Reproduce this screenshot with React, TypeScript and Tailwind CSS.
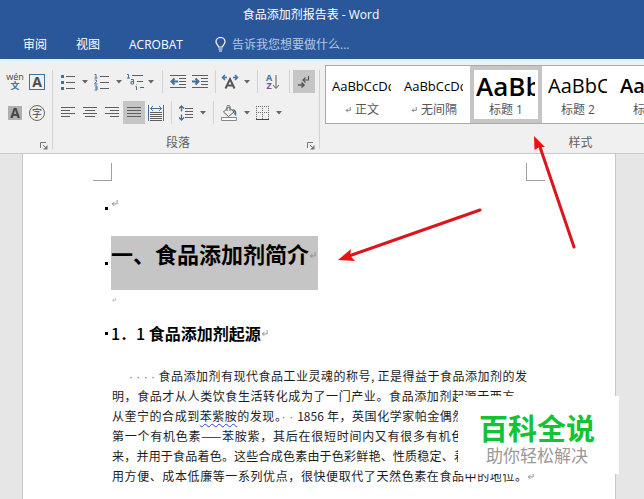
import type { ReactNode } from "react";

const ink = "#5f5f5f";
const blue = "#41719c";

function Tool({ label, w = "w-[22px]", active = false, children }: { label: string; w?: string; active?: boolean; children: ReactNode }) {
  return (
    <button
      type="button"
      aria-label={label}
      className={`flex h-[23px] shrink-0 items-center justify-center ${w} ${active ? "bg-[#c5c5c5]" : ""}`}
    >
      {children}
    </button>
  );
}

function Caret({ label }: { label: string }) {
  return (
    <Tool label={label} w="w-[12px]">
      <svg width="6" height="4" viewBox="0 0 6 4"><path d="M0 0h6L3 3.5z" fill="#666" /></svg>
    </Tool>
  );
}

function Sep({ w = "w-[8px]" }: { w?: string }) {
  return (
    <span className={`flex h-[23px] shrink-0 justify-center ${w}`}>
      <span className="w-px bg-[#d2d2d2]" />
    </span>
  );
}

function Lines({ rows }: { rows: [number, number][] }) {
  return (
    <svg width="16" height="16" viewBox="0 0 16 16" shapeRendering="crispEdges">
      {rows.map(([x, w], i) => (
        <rect key={i} x={x} y={2 + i * 3} width={w} height="1" fill={ink} />
      ))}
    </svg>
  );
}

function Indent({ out }: { out: boolean }) {
  return (
    <svg width="16" height="16" viewBox="0 0 16 16">
      <path d="M0 1.500h16M9 4.500h7M9 7.500h7M9 10.500h7M0 13.500h16" stroke={ink} />
      <path d={out ? "M8 7.500H2M4.500 4.500l-3 3 3 3" : "M0 7.500h6M3.500 4.500l3 3-3 3"} stroke={blue} strokeWidth="2" fill="none" />
    </svg>
  );
}

function Return({ size = 7, color = "#888" }: { size?: number; color?: string }) {
  return (
    <svg className="shrink-0" width={size} height={size} viewBox="0 0 8 8">
      <path d="M7 0v4.500H1.500M4 2L1.500 4.500 4 7" stroke={color} fill="none" />
    </svg>
  );
}

function Launcher({ label }: { label: string }) {
  return (
    <button type="button" aria-label={label} className="flex h-[8px] w-[8px]">
      <svg width="8" height="8" viewBox="0 0 8 8">
        <path d="M.5 6V.5H6M3 3l3 3" stroke="#777" fill="none" />
        <path d="M7.500 3v4.500H3z" fill="#777" />
      </svg>
    </button>
  );
}

function FontTools() {
  return (
    <section aria-label="字体" className="flex w-[53px] shrink-0 flex-col border-r border-[#d2d2d2] pl-1">
      <div className="flex">
        <Tool label="拼音指南">
          <span className="flex flex-col items-center">
            <span className="h-[8px] text-[9px] leading-[8px] text-[#444]">wén</span>
            <span className="h-[9px] text-[9px] font-bold leading-[9px] text-[#41719c]">文</span>
          </span>
        </Tool>
        <Tool label="字符边框">
          <span className="flex h-[16px] w-[16px] items-center justify-center border border-[#41719c] text-[14px] font-bold leading-[14px] text-[#4a4a4a]">A</span>
        </Tool>
      </div>
      <div className="mt-2 flex">
        <Tool label="字符底纹">
          <span className="flex h-[14px] w-[14px] items-center justify-center bg-[#b0b0b0] text-[14px] font-bold leading-[14px] text-[#444]">A</span>
        </Tool>
        <Tool label="带圈字符">
          <span className="flex h-[16px] w-[16px] items-center justify-center rounded-full border border-[#666] text-[10px] leading-[10px] text-[#444]">字</span>
        </Tool>
      </div>
      <div className="mt-[18px] flex justify-end pr-1"><Launcher label="字体设置" /></div>
    </section>
  );
}

function ParagraphTools() {
  return (
    <section aria-label="段落" className="flex w-[267px] shrink-0 flex-col border-r border-[#d2d2d2] pl-1">
      <div className="flex">
        <Tool label="项目符号">
          <svg width="14" height="16" viewBox="0 0 14 16">
            <path d="M5 2.500h9M5 8.500h9M5 14.500h9" stroke={ink} />
            <path d="M0 1h3v3H0zM0 7h3v3H0zM0 13h3v3H0z" fill={blue} />
          </svg>
        </Tool>
        <Caret label="更多项目符号" />
        <Tool label="编号">
          <svg width="16" height="18" viewBox="0 0 16 18">
            <path d="M6 3.500h9M6 9.500h9M6 15.500h9" stroke={ink} />
            <path d="M.5 1.500H2V5M.5 5h3M.5 7h2v1.500L.5 11h3M.5 13h2.500v4H.5M1 15h2" stroke={blue} fill="none" />
          </svg>
        </Tool>
        <Caret label="更多编号" />
        <Tool label="多级列表" w="w-[20px]">
          <svg width="18" height="18" viewBox="0 0 18 18">
            <path d="M6 2.500h11M11 8.500h6M14 14.500h4" stroke={ink} />
            <path d="M1 1.500h1.500V5M1 5h3M5 6.500h2.500V11H5V8.500h2.500M10.500 11.500V12M9.500 13.500h1V17" stroke={blue} fill="none" />
          </svg>
        </Tool>
        <Caret label="更多多级列表" />
        <Sep w="w-[10px]" />
        <Tool label="减少缩进量"><Indent out /></Tool>
        <Tool label="增加缩进量"><Indent out={false} /></Tool>
        <Sep />
        <Tool label="中文版式">
          <svg width="18" height="16" viewBox="0 0 18 16">
            <path d="M4.500 14.500L9 5l4.500 9.500M6 11.500h6" stroke="#555" strokeWidth="2" fill="none" />
            <path d="M6 3.500H2M4 1L1.500 3.500 4 6M12 3.500h4M14 1l2.500 2.500L14 6" stroke={blue} strokeWidth="1.500" fill="none" />
          </svg>
        </Tool>
        <Caret label="更多中文版式" />
        <Sep />
        <Tool label="排序" w="w-[24px]">
          <span className="flex flex-col text-[9px] font-bold leading-[8px]">
            <span className="text-[#41719c]">A</span>
            <span className="text-[#80529b]">Z</span>
          </span>
          <svg width="8" height="16" viewBox="0 0 8 16"><path d="M4 1v13M1 11l3 3.500L7 11" stroke={ink} fill="none" /></svg>
        </Tool>
        <Sep />
        <Tool label="显示编辑标记" active>
          <svg width="12" height="14" viewBox="0 0 12 14">
            <path d="M10.500 1v4H5M7.500 2.500L5 5l2.500 2.500" stroke="#555" fill="none" strokeWidth="1.200" />
            <path d="M0 10h6M3.500 7.500L6 10l-2.500 2.500" stroke="#555" fill="none" strokeWidth="1.500" />
          </svg>
        </Tool>
      </div>
      <div className="mt-2 flex">
        <Tool label="左对齐"><Lines rows={[[1, 14], [1, 9], [1, 14], [1, 9]]} /></Tool>
        <Tool label="居中"><Lines rows={[[1, 14], [3, 10], [1, 14], [3, 10]]} /></Tool>
        <Tool label="右对齐"><Lines rows={[[1, 14], [6, 9], [1, 14], [6, 9]]} /></Tool>
        <Tool label="两端对齐" active><Lines rows={[[1, 14], [1, 14], [1, 14], [1, 14]]} /></Tool>
        <Tool label="分散对齐">
          <svg width="16" height="16" viewBox="0 0 16 16">
            <path d="M.5 0v16M15.500 0v16M3 3.500h10M5 1L2.500 3.500 5 6M11 1l2.500 2.500L11 6" stroke={blue} fill="none" />
            <path d="M2 7.500h12M2 9.500h12M2 11.500h12M2 13.500h12M2 15.500h12" stroke={ink} />
          </svg>
        </Tool>
        <Sep />
        <Tool label="行距">
          <svg width="14" height="16" viewBox="0 0 14 16">
            <path d="M6 3.500h8M6 6.500h8M6 9.500h8M6 12.500h8" stroke={ink} />
            <path d="M2.500 1v5.500M2.500 9.500V15M0 3.500L2.500 1 5 3.500M0 12.500L2.500 15 5 12.500" stroke={blue} strokeWidth="1.300" fill="none" />
          </svg>
        </Tool>
        <Caret label="更多行距" />
        <Sep />
        <Tool label="底纹" w="w-[24px]">
          <svg width="18" height="16" viewBox="0 0 18 16">
            <path d="M8.500 2l5.500 5-5.500 4.500-5-4.500zM7 6V1.500C7 0 10 0 10 1.500V6" stroke={ink} fill="none" />
            <path d="M12 4c4 0 5 3 4 7-2-1-2-3-1.500-4z" fill={blue} />
            <path d="M1.500 12.500h15v3h-15z" stroke="#888" fill="#fff" />
          </svg>
        </Tool>
        <Caret label="更多底纹" />
        <Tool label="边框" w="w-[20px]">
          <svg width="14" height="14" viewBox="0 0 14 14">
            <path d="M0 .5h13M0 6.500h13M.5 0v13M6.500 0v13M12.500 0v13" stroke="#666" strokeDasharray="1 1" />
            <path d="M0 13.500h13" stroke="#444" />
          </svg>
        </Tool>
        <Caret label="更多边框" />
      </div>
      <div className="mt-[10px] flex h-[18px] items-center text-[12px] text-[#5f5f5f]">
        <span className="flex-1 pr-2 text-center leading-[18px]">段落</span>
        <span className="pr-1 pt-[6px]"><Launcher label="段落设置" /></span>
      </div>
    </section>
  );
}

const styles = [
  { sample: "AaBbCcDd", look: "text-[13px]", name: "正文", mark: true, on: false },
  { sample: "AaBbCcDd", look: "text-[13px]", name: "无间隔", mark: true, on: false },
  { sample: "AaBbC", look: "text-[26px] font-semibold", name: "标题 1", mark: false, on: true },
  { sample: "AaBbC", look: "text-[20px]", name: "标题 2", mark: false, on: false },
  { sample: "AaBbC", look: "text-[20px] font-semibold", name: "标题 3", mark: false, on: false },
];

function StyleGallery() {
  return (
    <section aria-label="样式" className="-mt-[5px] flex w-[516px] shrink-0 flex-col pl-[5px]">
      <div className="flex h-[60px] border border-[#ababab] bg-white">
        {styles.map((s, i) => (
          <button
            key={i}
            type="button"
            className={`flex h-[57px] w-[72px] shrink-0 flex-col border-4 px-[2px] ${s.on ? "border-[#c5c5c5]" : "border-transparent"}`}
          >
            <span className={`flex h-[32px] w-[59px] items-center overflow-hidden text-black ${s.look} leading-[30px]`}>{s.sample}</span>
            <span className="flex h-[16px] w-full items-center justify-center gap-1 text-[12px] leading-[16px] text-[#555]">
              {s.mark && <Return size={6} color="#666" />}
              {s.name}
            </span>
          </button>
        ))}
      </div>
      <div className="mt-[10px] h-[18px] text-center text-[12px] leading-[18px] text-[#5f5f5f]">样式</div>
    </section>
  );
}

function Bullet() {
  return <span className="mr-[3px] h-[3px] w-[3px] shrink-0 bg-black" />;
}

const line = "block h-[20px] whitespace-nowrap [text-align:justify] [text-align-last:justify]";

function Page() {
  return (
    <article className="mx-auto flex-1 border-x border-[#c6c6c6] bg-white pt-[9px] text-black">
      <div className="flex justify-between px-[70px]">
        <span className="h-[18px] w-[19px] border-b border-r border-[#a0a0a0]" />
        <span className="h-[18px] w-[19px] border-b border-l border-[#a0a0a0]" />
      </div>
      <div className="mt-[15px] flex h-[20px] items-center pl-[82px]">
        <span className="flex pt-[4px]"><Bullet /></span>
        <span className="pb-[6px]"><Return /></span>
      </div>
      <div className="mt-[20px] flex h-[54px] items-center pl-[82px]">
        <Bullet />
        <h1 className="flex h-[54px] items-start bg-[#c5c5c5] pr-[2px] pt-px text-[22px] font-bold leading-[32px]">
          一、食品添加剂简介
          <span className="pt-[15px]"><Return /></span>
        </h1>
      </div>
      <div className="flex h-[20px] items-center pl-[89px]"><Return size={4} /></div>
      <div className="mt-[11px] flex h-[24px] items-center pl-[82px]">
        <Bullet />
        <h2 className="flex items-center text-[16px] font-bold leading-[24px]">
          <span className="font-medium">1．1&nbsp;</span>食品添加剂起源
          <Return />
        </h2>
      </div>
      <p className="mt-[21px] pl-[89px] pr-[88px] text-[12px] leading-[20px] text-[#1c1c1c]">
        <span className={line}>
          <span className="inline-block w-[46px] pr-[3px] text-right font-['Liberation_Sans'] leading-[18px] text-[#777] [text-align-last:right]">· · · ·</span>
          食品添加剂有现代食品工业灵魂的称号, 正是得益于食品添加剂的发
        </span>
        <span className={line}>明，食品才从人类饮食生活转化成为了一门产业。食品添加剂起源于西方，</span>
        <span className={line}>
          从奎宁的合成到<span className="underline decoration-[#2a3fd0] decoration-wavy decoration-1 underline-offset-2">苯紫胺</span>的发现。<span className="font-['Liberation_Sans'] text-[#777]">·&nbsp;· </span>1856 年，英国化学家帕金偶然合成出世界
        </span>
        <span className={line}>第一个有机色素——苯胺紫，其后在很短时间内又有很多有机色素被合成出</span>
        <span className={line}>来，并用于食品着色。这些合成色素由于色彩鲜艳、性质稳定、着色力强、使</span>
        <span className="-mr-[7px] flex items-center">
          <span className={`${line} flex-1`}>用方便、成本低廉等一系列优点，很快便取代了天然色素在食品中的地位。</span>
          <Return />
        </span>
      </p>
    </article>
  );
}

export default function App() {
  return (
    <div className="relative flex h-screen flex-col overflow-hidden bg-[#e6e6e6] font-['Open_Sans','Noto_Sans_CJK_SC',sans-serif]">
      <header className="h-[59px] shrink-0 bg-[#2a579a] text-white">
        <div className="h-[30px] pr-[22px] text-center text-[12px] leading-[30px]">食品添加剂报告表 - Word</div>
        <nav className="flex h-[29px] items-center pl-[23px] text-[12px]">
          <a href="#review" className="w-[53px]">审阅</a>
          <a href="#view" className="w-[53px]">视图</a>
          <a href="#acrobat" className="w-[86px]">ACROBAT</a>
          <label htmlFor="tell" aria-label="告诉我您想要做什么" className="w-[17px]">
            <svg width="11" height="15" viewBox="0 0 11 15">
              <path d="M3.500 10C3.500 8 1 7.500 1 4.800a4.500 4.300 0 0 1 9 0C10 7.500 7.500 8 7.500 10zM3.500 12h4M4 14h3" stroke="#fff" strokeWidth="1.200" fill="none" />
            </svg>
          </label>
          <input id="tell" placeholder="告诉我您想要做什么..." className="min-w-0 flex-1 bg-transparent text-[12px] outline-none placeholder:text-[#b4c7e5]" />
        </nav>
      </header>
      <div className="flex h-[95px] shrink-0 overflow-hidden border-b border-t-2 border-b-[#c8c8c8] border-t-[#e6f0fa] bg-[#f0f0f0] pb-1 pt-[9px]">
        <FontTools />
        <ParagraphTools />
        <StyleGallery />
      </div>
      <main className="flex min-h-0 flex-1 pl-[22px] pr-[28px] font-['Noto_Sans_CJK_SC',sans-serif]">
        <Page />
      </main>
      <svg className="pointer-events-none absolute left-0 top-0" width="644" height="499" viewBox="0 0 644 499">
        <path d="M480 210L349 256M574 247L540 147" stroke="#dc141c" strokeWidth="3" strokeLinecap="round" />
        <path d="M338 260l13-11-1 6.500 5 5.500zM534 136l11 11-5.500 0-5 3z" fill="#ee1010" />
      </svg>
      <aside className="absolute right-[25px] top-[396px] flex h-[78px] w-[161px] flex-col items-center bg-white pr-[3px] pt-[13px] font-['Noto_Sans_CJK_SC',sans-serif]">
        <strong className="text-[29px] font-bold leading-[36px] text-[#12c334]">百科全说</strong>
        <span className="text-[17px] leading-[20px] text-[#999]">助你轻松解决</span>
      </aside>
    </div>
  );
}
